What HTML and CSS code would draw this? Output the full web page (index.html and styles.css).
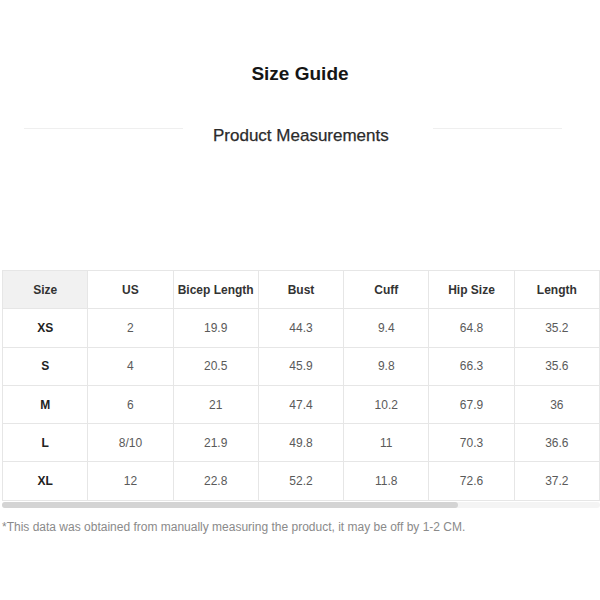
FILE: index.html
```html
<!DOCTYPE html>
<html lang="en">
<head>
<meta charset="utf-8">
<title>Size Guide</title>
<link rel="stylesheet" href="styles.css">
</head>
<body>
<main class="guide">
  <h1 class="title">Size Guide</h1>
  <div class="subhead">
    <span class="rule rule-left"></span>
    <h2 class="subtitle">Product Measurements</h2>
    <span class="rule rule-right"></span>
  </div>
  <div class="table-wrap">
    <div class="table-scroll">
      <table class="sizes">
        <thead>
          <tr>
            <th class="corner">Size</th>
            <th>US</th>
            <th>Bicep Length</th>
            <th>Bust</th>
            <th>Cuff</th>
            <th>Hip Size</th>
            <th>Length</th>
          </tr>
        </thead>
        <tbody>
          <tr><th>XS</th><td>2</td><td>19.9</td><td>44.3</td><td>9.4</td><td>64.8</td><td>35.2</td></tr>
          <tr><th>S</th><td>4</td><td>20.5</td><td>45.9</td><td>9.8</td><td>66.3</td><td>35.6</td></tr>
          <tr><th>M</th><td>6</td><td>21</td><td>47.4</td><td>10.2</td><td>67.9</td><td>36</td></tr>
          <tr><th>L</th><td>8/10</td><td>21.9</td><td>49.8</td><td>11</td><td>70.3</td><td>36.6</td></tr>
          <tr><th>XL</th><td>12</td><td>22.8</td><td>52.2</td><td>11.8</td><td>72.6</td><td>37.2</td></tr>
        </tbody>
      </table>
    </div>
    <div class="scrollbar"><div class="thumb"></div></div>
  </div>
  <p class="note">*This data was obtained from manually measuring the product, it may be off by 1-2 CM.</p>
</main>
</body>
</html>
```
FILE: styles.css
```css
html, body {
  margin: 0;
  padding: 0;
  background: #ffffff;
}

body {
  font-family: "Liberation Sans", Arial, sans-serif;
  color: #333;
}

.guide {
  padding-top: 62px;
}

.title {
  margin: 0;
  text-align: center;
  font-size: 19px;
  line-height: 24px;
  font-weight: 700;
  color: #151515;
}

.subhead {
  display: flex;
  align-items: flex-start;
  margin-top: 40px;
  padding: 0 40px 0 24px;
  gap: 30px;
}

.rule {
  flex: 0 0 auto;
  height: 1px;
  background: #efefef;
  margin-top: 2px;
}

.rule-left {
  width: 159px;
}

.rule-right {
  width: 129px;
  margin-left: 14px;
}

.subtitle {
  margin: 0;
  font-size: 17px;
  line-height: 20px;
  font-weight: 400;
  color: #2b2b2b;
  white-space: nowrap;
  -webkit-text-stroke: 0.25px #2b2b2b;
}

.table-wrap {
  margin-top: 124px;
  padding-left: 2px;
}

.table-scroll {
  overflow: hidden;
}

.sizes {
  width: 598px;
  table-layout: fixed;
  border-collapse: collapse;
  font-size: 12px;
}

.sizes th,
.sizes td {
  height: 37.3px;
  padding: 0;
  border: 1px solid #e6e6e6;
  text-align: center;
  vertical-align: middle;
}

.sizes thead th {
  font-weight: 700;
  color: #333;
}

.sizes thead th.corner {
  background: #f1f1f1;
}

.sizes tbody th {
  font-weight: 700;
  color: #222;
}

.sizes td {
  color: #5a5a5a;
}

.scrollbar {
  margin-top: 1px;
  height: 6px;
  background: #f4f4f4;
  border-radius: 3px;
}

.thumb {
  width: 456px;
  height: 6px;
  background: #d4d4d4;
  border-radius: 3px;
}

.note {
  margin: 12px 0 0 2px;
  font-size: 12px;
  line-height: 14px;
  color: #8a8a8a;
}
```
